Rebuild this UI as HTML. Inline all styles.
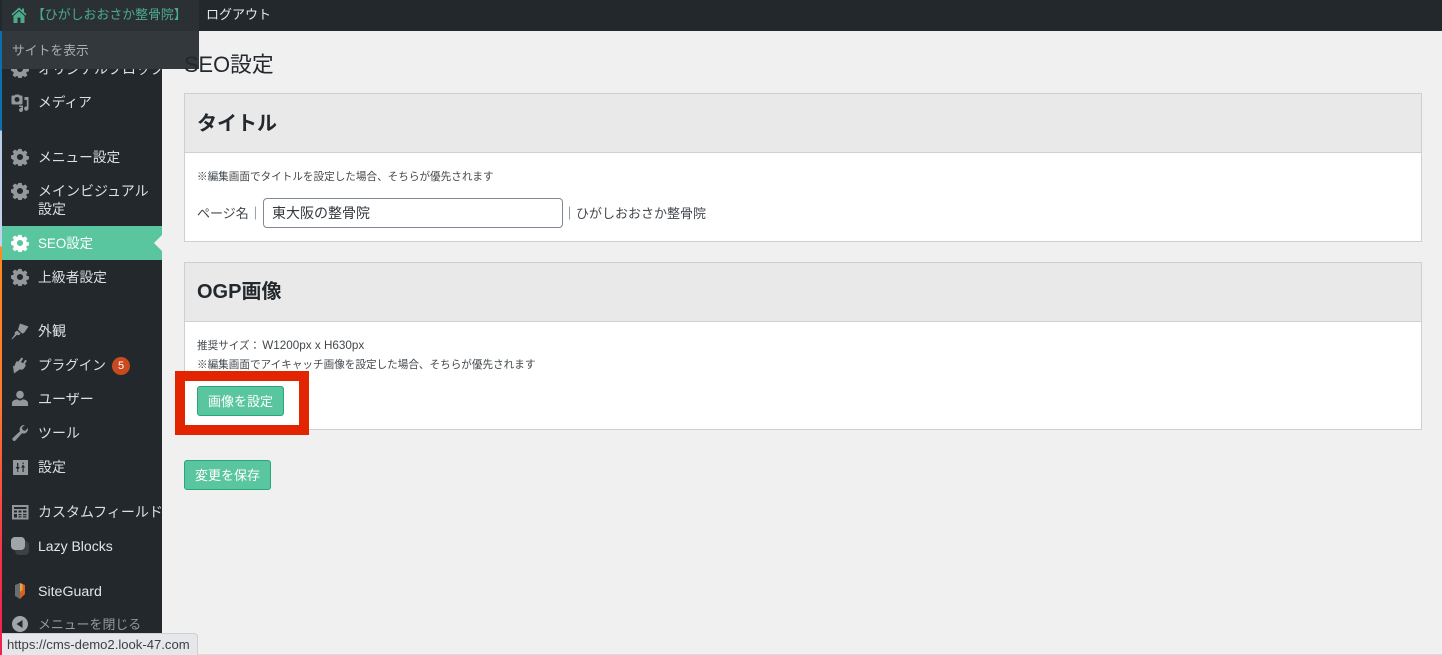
<!DOCTYPE html>
<html lang="ja">
<head>
<meta charset="utf-8">
<style>
html,body{margin:0;padding:0;width:1442px;height:655px;overflow:hidden;background:#f0f0f1;}
body{position:relative;font-family:"Liberation Sans","Noto Sans CJK JP",sans-serif;color:#32373c;}
.a{position:absolute;white-space:nowrap;}
#strip{left:0;top:0;width:2px;height:655px;background:linear-gradient(#0e6fb0 0,#0e6fb0 130px,#b9cbe6 131px,#c4d4ec 246px,#ff8a1f 247px,#ff7a30 400px,#f5304a 560px,#f0204f 655px);}
#side{left:2px;top:0;width:160px;height:655px;background:#23282d;}
#top{left:0;top:0;width:1442px;height:31px;background:#23282d;}
#drop{left:2px;top:0;width:197px;height:69px;background:#33383d;}
#drop0{left:2px;top:0;width:197px;height:31px;background:#2b3035;}
.m{left:38px;font-size:14px;line-height:18px;color:#dcdfe0;}
.i{left:11px;width:18px;height:18px;}
.box{left:184px;width:1236px;background:#fff;border:1px solid #ccd0d4;}
.hd{position:absolute;left:0;top:0;width:1236px;height:58px;background:#e9e9e9;border-bottom:1px solid #ccd0d4;}
.hd span{position:absolute;left:12px;font-size:20px;font-weight:700;line-height:26px;top:16px;color:#23282d;}
.t{font-size:10.6px;line-height:14px;color:#43484c;}
.btn{box-sizing:border-box;background:#5ac6a0;border:1px solid #27a57c;border-radius:3px;color:#fff;font-size:13px;text-align:center;}
</style>
</head>
<body>
<svg width="0" height="0" style="position:absolute">
<defs>
<symbol id="gear" viewBox="0 0 20 20"><path fill-rule="evenodd" d="M8.200 1h3.600l.5 2.400 1.400.6 2-1.300 2.600 2.500-1.400 2 .6 1.500 2.400.5v3.500l-2.400.5-.6 1.400 1.400 2-2.600 2.600-2-1.400-1.400.6-.5 2.400H8.200l-.5-2.400-1.400-.6-2 1.400-2.600-2.600 1.400-2-.6-1.400L0 11.700V8.200l2.500-.5.6-1.500-1.400-2 2.600-2.500 2 1.300 1.400-.6zM10 6.600a3.400 3.400 0 1 0 0 6.800 3.400 3.400 0 0 0 0-6.800z"/></symbol>
</defs>
</svg>

<div class="a" id="side"></div>
<div class="a" id="strip"></div>

<!-- side menu -->
<div class="a m" style="top:60px">オリジナルブロック</div>
<svg class="a i" style="top:60px" fill="#94989c"><use href="#gear"/></svg>

<svg class="a i" style="top:94px" viewBox="0 0 18 18"><path fill="#94989c" fill-rule="evenodd" d="M1.500 1.500h2l1-1h3.500l1 1h1.500a1 1 0 0 1 1 1V9a1.500 1.500 0 0 1-1.500 1.500H2A1.500 1.500 0 0 1 .5 9V2.500a1 1 0 0 1 1-1zM6 3a2.500 2.500 0 1 0 0 5 2.500 2.500 0 0 0 0-5z"/><path fill="#94989c" d="M13.500 3h4v11.500a2.200 2.200 0 1 1-1.700-2.100V6h-2.300zM8 11.500h4v4.500a2 2 0 1 1-1.600-2v-1h-2.400z"/></svg>
<div class="a m" style="top:94px;font-size:13.7px">メディア</div>

<svg class="a i" style="top:148px" fill="#94989c"><use href="#gear"/></svg>
<div class="a m" style="top:149px;font-size:13.7px">メニュー設定</div>

<svg class="a i" style="top:182px" fill="#94989c"><use href="#gear"/></svg>
<div class="a m" style="top:182px">メインビジュアル<br>設定</div>

<div class="a" style="left:2px;top:226px;width:160px;height:34px;background:#5ac6a0"></div>
<svg class="a i" style="top:234px" fill="#fff"><use href="#gear"/></svg>
<div class="a m" style="top:235px;color:#fff;font-size:13.4px">SEO設定</div>
<div class="a" style="left:154px;top:235px;width:0;height:0;border-top:8px solid transparent;border-bottom:8px solid transparent;border-right:8px solid #f0f0f1"></div>

<svg class="a i" style="top:268px" fill="#94989c"><use href="#gear"/></svg>
<div class="a m" style="top:269px;font-size:13.8px">上級者設定</div>

<svg class="a i" style="top:322px" viewBox="0 0 18 18"><path fill="#94989c" d="M9 1.500l8.500 3-2.200 3.300-2.300 3.200-2 .5-4-4zM6.200 8.500l3.300 3.300-1.500 1.500-2-.5L1 17.500.5 17 4 12l-.5-1.500z"/></svg>
<div class="a m" style="top:322px">外観</div>

<svg class="a i" style="top:356px" viewBox="0 0 18 18"><path fill="#94989c" d="M10.500 1.500l1.700 1-2.200 3.500 2 1.200 2.200-3.500 1.700 1-2.200 3.500 1.300.8-1.500 2.700c-1 1.700-3 2.400-4.700 1.700L3 17.500 2 10l2-.5c0-1.300.4-2.300 1-3.200l.8-1.300 1.400.8z"/></svg>
<div class="a m" style="top:357px;font-size:13.6px">プラグイン</div>
<div class="a" style="left:112px;top:357px;width:18px;height:18px;border-radius:9px;background:#ca4a1f;color:#fff;font-size:11px;line-height:18px;text-align:center">5</div>

<svg class="a i" style="top:390px" viewBox="0 0 18 18"><path fill="#94989c" d="M9 .8a3.800 3.800 0 0 1 3.800 3.800c0 2-1.300 4-3.800 4S5.200 6.600 5.200 4.600A3.800 3.800 0 0 1 9 .8zM6.300 9.300C7 10 8 10.500 9 10.500s2-.5 2.700-1.200c3.300.4 5.300 2 5.300 3.700v3H1v-3c0-1.700 2-3.300 5.300-3.700z"/></svg>
<div class="a m" style="top:390px">ユーザー</div>

<svg class="a i" style="top:424px" viewBox="0 0 18 18"><path fill="#94989c" d="M17 5a4.500 4.500 0 0 1-6 4.300L4.500 16.500a1.700 1.700 0 0 1-2.600-.1 1.700 1.700 0 0 1 0-2.500L9 7.200A4.500 4.500 0 0 1 13.800 1L11 3.500l.7 2.600 2.600.7L16.800 4c.1.300.2.700.2 1z"/></svg>
<div class="a m" style="top:424px">ツール</div>

<svg class="a i" style="top:458px" viewBox="0 0 18 18"><path fill="#94989c" fill-rule="evenodd" d="M2 2h15v15H2zM6 5v4H4.500l2.100 3 .2 0 2-3H7.300V5H6zm0.300 7v2h1v-2zM11.500 14V9.500h-1.500l2.100-3 2 3h-1.400V14zM11.500 4.500v1.500h1.200V4.500z"/></svg>
<div class="a m" style="top:458px">設定</div>

<svg class="a i" style="top:503px" viewBox="0 0 18 18"><path fill="#94989c" fill-rule="evenodd" d="M1 2h16.500v14.500H1zM3 4v2h12.500V4zM3 7.500v2h3v-2zm4.500 0v2h3v-2zm4.500 0v2h3.500v-2zM3 11v3.500h3V11zm4.500 0v1.300h3V11zm4.500 0v1.300h3.500V11zM7.500 13.200v1.300h3v-1.300zm4.500 0v1.300h3.500v-1.300z"/></svg>
<div class="a m" style="top:503px;width:124px;overflow:hidden">カスタムフィールド</div>

<div class="a" style="left:15px;top:541px;width:14px;height:14px;border-radius:4px;background:#3d4145"></div>
<div class="a" style="left:11px;top:537px;width:14px;height:13px;border-radius:4px;background:#a0a5aa"></div>
<div class="a m" style="top:537px;color:#e4e6e7">Lazy Blocks</div>

<svg class="a" style="left:13px;top:582px" width="14" height="18" viewBox="0 0 14 18"><path fill="#6b6e70" d="M2 3l5-2v16l-5-3z"/><path fill="#d9601f" d="M7 1l5 2v9l-5 5z"/><path fill="#e9a34a" d="M7 1l2.500 1v6L7 10z"/></svg>
<div class="a m" style="top:583px;color:#e4e6e7;font-size:14.2px">SiteGuard</div>

<svg class="a" style="left:12px;top:616px" width="16" height="16" viewBox="0 0 16 16"><circle cx="8" cy="8" r="8" fill="#a0a5aa"/><path fill="#23282d" d="M10.500 4v8L4.500 8z"/></svg>
<div class="a m" style="top:616px;color:#96999d;font-size:12.9px">メニューを閉じる</div>

<!-- top bar -->
<div class="a" id="top"></div>
<div class="a" id="drop"></div>
<div class="a" id="drop0"></div>
<svg class="a" style="left:11px;top:6px" width="16" height="18" viewBox="0 0 16 18"><path fill="#4dab8c" fill-rule="evenodd" d="M8 1.500L0.500 8.300 1.500 9.500 8 3.700 14.500 9.500l1-1.200-2.500-2.300V2.500h-2v1.700zM2.500 10L8 5.100l5.500 4.900v7H2.500zM6.500 11.500V17h3v-5.500z"/></svg>
<div class="a" style="left:32px;top:7px;font-size:12.9px;line-height:16px;color:#4dab8c;">【ひがしおおさか整骨院】</div>
<div class="a" style="left:206px;top:7px;font-size:13px;line-height:16px;color:#e8e8e8;">ログアウト</div>
<div class="a" style="left:12px;top:43px;font-size:12.8px;line-height:16px;color:#a8adb1;">サイトを表示</div>

<!-- content -->
<div class="a" style="left:184px;top:51px;font-size:21.8px;line-height:28px;color:#23282d;">SEO設定</div>

<div class="a box" style="top:93px;height:147px">
  <div class="hd"><span style="top:17px">タイトル</span></div>
  <div class="a t" style="left:12px;top:76px">※編集画面でタイトルを設定した場合、そちらが優先されます</div>
  <div class="a" style="left:12px;top:111px;font-size:13px;line-height:17px;color:#43484c">ページ名｜</div>
  <div class="a" style="left:78px;top:104px;box-sizing:border-box;width:300px;height:30px;background:#fff;border:1px solid #7e8993;border-radius:4px;font-size:14px;line-height:28px;padding-left:8px;color:#32373c">東大阪の整骨院</div>
  <div class="a" style="left:378px;top:111px;font-size:13px;line-height:17px;color:#43484c">｜ひがしおおさか整骨院</div>
</div>

<div class="a box" style="top:262px;height:166px">
  <div class="hd"><span>OGP画像</span></div>
  <div class="a t" style="left:12px;top:76px">推奨サイズ：<span style="font-size:11.7px;margin-left:2px">W1200px x H630px</span></div>
  <div class="a t" style="left:12px;top:95px">※編集画面でアイキャッチ画像を設定した場合、そちらが優先されます</div>
</div>

<div class="a" style="left:175px;top:371px;width:134px;height:64px;box-sizing:border-box;border:10px solid #e32400"></div>
<div class="a btn" style="left:197px;top:386px;width:87px;height:30px;line-height:29px">画像を設定</div>
<div class="a btn" style="left:184px;top:460px;width:87px;height:30px;line-height:29px">変更を保存</div>

<!-- status -->
<div class="a" style="left:2px;top:633px;box-sizing:border-box;width:196px;height:22px;background:#e6e7ea;border:1px solid #cfd0d3;border-left:0;border-bottom:0;border-radius:0 4px 0 0;font-size:13.1px;line-height:22px;padding-left:5px;color:#3c3f43">https://cms-demo2.look-47.com</div>
<div class="a" style="left:198px;top:654px;width:1244px;height:1px;background:#dcdcdc"></div>
</body>
</html>
